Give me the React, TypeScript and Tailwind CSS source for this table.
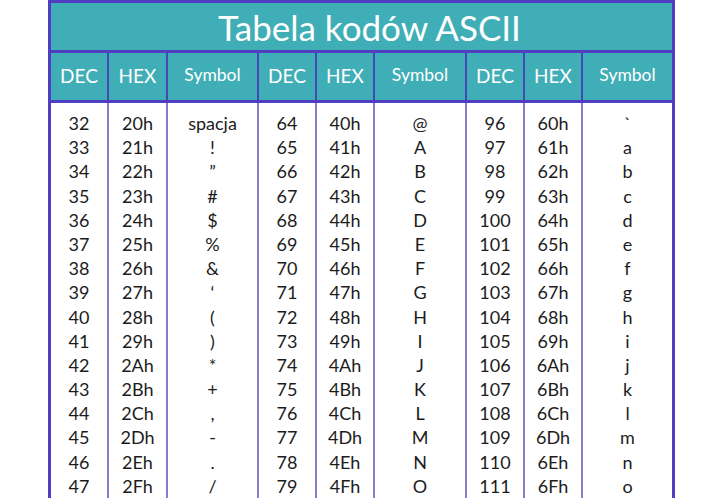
import React from "react";

const cols = ["w-[56px]", "w-[59px]", "w-[91px]", "w-[58px]", "w-[58px]", "w-[92px]", "w-[58px]", "w-[58px]", "w-[91px]"];

const sym1 = ["spacja", "!", "\u201D", "#", "$", "%", "&", "\u2018", "(", ")", "*", "+", ",", "-", ".", "/"];
const sym2 = ["@", "A", "B", "C", "D", "E", "F", "G", "H", "I", "J", "K", "L", "M", "N", "O"];
const sym3 = ["`", "a", "b", "c", "d", "e", "f", "g", "h", "i", "j", "k", "l", "m", "n", "o"];

function hex(n: number) {
  return n.toString(16).toUpperCase() + "h";
}

export default function App() {
  const rows = Array.from({ length: 16 }, (_, i) => i);
  const columns: string[][] = [
    rows.map((i) => String(32 + i)),
    rows.map((i) => hex(32 + i)),
    sym1,
    rows.map((i) => String(64 + i)),
    rows.map((i) => hex(64 + i)),
    sym2,
    rows.map((i) => String(96 + i)),
    rows.map((i) => hex(96 + i)),
    sym3,
  ];
  const headers = ["DEC", "HEX", "Symbol", "DEC", "HEX", "Symbol", "DEC", "HEX", "Symbol"];
  return (
    <div className="w-[720px] h-[500px] overflow-hidden bg-white" style={{ fontFamily: "Lato, 'Open Sans', sans-serif" }}>
      <div className="ml-[48px] w-[627px] border-[3px] border-b-0 border-[#4f3ec2] flex flex-col">
        <div className="h-[47px] bg-[#40aeb6] flex items-center justify-center text-white text-[35px] leading-none pl-[16px] pt-[2px]">
          Tabela kodów ASCII
        </div>
        <div className="h-[3px] bg-[#4f3ec2]" />
        <div className="h-[47px] bg-[#40aeb6] flex text-white">
          {headers.map((h, i) => (
            <div
              key={i}
              className={`${cols[i]} flex items-center justify-center ${i > 0 ? "border-l-2 border-[#4b46b6]" : ""} ${h === "Symbol" ? "text-[17.5px] pb-[3px]" : "text-[19px]"}`}
            >
              {h}
            </div>
          ))}
        </div>
        <div className="h-[3px] bg-[#4f3ec2]" />
        <div className="flex text-[#1c1c1c] text-[18px]">
          {columns.map((c, i) => (
            <div
              key={i}
              className={`${cols[i]} pt-[8px] flex flex-col items-center ${i > 0 ? "border-l-2 border-[#857dcb]" : ""}`}
            >
              {c.map((v, j) => (
                <div key={j} className="h-[24.2px] leading-[24.2px]">
                  {v}
                </div>
              ))}
            </div>
          ))}
        </div>
      </div>
    </div>
  );
}
